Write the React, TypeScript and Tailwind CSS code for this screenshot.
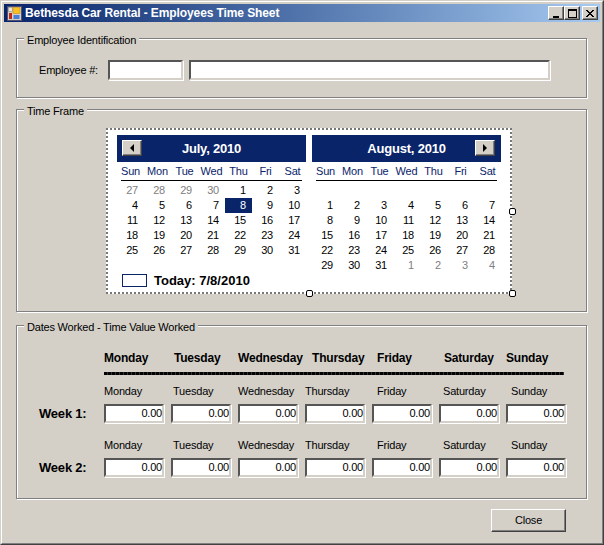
import React from 'react';

const julyDays: [number, boolean][] = [
  [27, true], [28, true], [29, true], [30, true], [1, false], [2, false], [3, false],
  ...Array.from({ length: 28 }, (_, i): [number, boolean] => [i + 4, false]),
];
const augustDays: [number | null, boolean][] = [
  ...Array.from({ length: 7 }, (): [null, boolean] => [null, false]),
  ...Array.from({ length: 31 }, (_, i): [number, boolean] => [i + 1, false]),
  [1, true], [2, true], [3, true], [4, true],
];
const weekDays = ['Sun', 'Mon', 'Tue', 'Wed', 'Thu', 'Fri', 'Sat'];

const headers = [
  { name: 'Monday', big: 'pl-0', small: 'pl-0' },
  { name: 'Tuesday', big: 'pl-[3px]', small: 'pl-[2px]' },
  { name: 'Wednesday', big: 'pl-0', small: 'pl-0' },
  { name: 'Thursday', big: 'pl-[7px]', small: 'pl-0' },
  { name: 'Friday', big: 'pl-[5px]', small: 'pl-[5px]' },
  { name: 'Saturday', big: 'pl-[5px]', small: 'pl-[4px]' },
  { name: 'Sunday', big: 'pl-0', small: 'pl-[5px]' },
];

function GroupBox({ title, className, children }: { title: string; className: string; children: React.ReactNode }) {
  return (
    <div className={`relative border border-[#808080] shadow-[1px_1px_0_#fff,inset_1px_1px_0_#fff] ${className}`}>
      <span className="absolute left-[7px] top-[-5px] bg-[#d4d0c8] px-[3px] leading-[13px]">{title}</span>
      {children}
    </div>
  );
}

function Sunken({ className, children }: { className: string; children?: React.ReactNode }) {
  return (
    <div className={`bg-white border-2 border-t-[#555] border-l-[#555] border-r-[#d4d0c8] border-b-[#d4d0c8] shadow-[1px_1px_0_#fff] ${className}`}>
      {children}
    </div>
  );
}

function Raised({ className, children }: { className: string; children?: React.ReactNode }) {
  return (
    <div className={`flex items-center justify-center bg-[#d4d0c8] border border-t-white border-l-white border-r-[#404040] border-b-[#404040] shadow-[inset_-1px_-1px_0_#808080] ${className}`}>
      {children}
    </div>
  );
}

function Month({ title, days, side, selected }: { title: string; days: [number | null, boolean][]; side: 'left' | 'right'; selected?: number }) {
  return (
    <div className="w-[189px]">
      <div className="relative flex h-[27px] items-center justify-center bg-[#0a246a] text-[13px] font-bold text-white">
        {title}
        {side === 'left' ? (
          <Raised className="absolute left-[5px] top-[5px] h-[16px] w-[20px]">
            <span className="border-y-[4px] border-r-[4px] border-y-transparent border-r-black" />
          </Raised>
        ) : (
          <Raised className="absolute right-[6px] top-[5px] h-[16px] w-[20px]">
            <span className="border-y-[4px] border-l-[4px] border-y-transparent border-l-black" />
          </Raised>
        )}
      </div>
      <div className="flex h-[18px] items-center">
        {weekDays.map((d) => (
          <span key={d} className="w-[27px] text-center text-[#0a246a]">{d}</span>
        ))}
      </div>
      <div className="mx-[4px] h-px w-[181px] bg-black" />
      <div className="mt-[2px] grid grid-cols-[repeat(7,27px)] auto-rows-[15px]">
        {days.map(([n, muted], i) => (
          <span
            key={i}
            className={`pr-[6px] text-right leading-[15px] ${
              !muted && n === selected ? 'bg-[#0a246a] text-white' : muted ? 'text-[#808080]' : 'text-black'
            }`}
          >
            {n}
          </span>
        ))}
      </div>
    </div>
  );
}

function Handle({ className }: { className: string }) {
  return <span className={`absolute h-[7px] w-[7px] rounded-[2px] border border-black bg-white ${className}`} />;
}

export default function App() {
  return (
    <div className="h-[545px] w-[604px] overflow-hidden bg-[#d4d0c8] text-[11px] tracking-[-0.2px] text-black [font-family:'Liberation_Sans',sans-serif]">
      <div className="h-full border border-t-[#d4d0c8] border-l-[#d4d0c8] border-r-[#404040] border-b-[#404040]">
        <div className="h-full border border-t-white border-l-white border-r-[#808080] border-b-[#808080] p-[2px]">
          {/* title bar */}
          <div className="flex h-[18px] items-center bg-gradient-to-r from-[#0a246a] to-[#a6caf0] pl-[3px] pr-[2px]">
            <svg width="15" height="15" viewBox="0 0 15 15" className="shrink-0">
              <rect x="0.5" y="0.5" width="14" height="14" fill="#d4d0c8" stroke="#505070" />
              <rect x="1.5" y="1.5" width="4" height="4" fill="#e8e4dc" stroke="#808080" strokeWidth="0.5" />
              <rect x="6" y="1.5" width="7" height="6" fill="#f8c020" stroke="#c08010" strokeWidth="0.5" />
              <rect x="2" y="7" width="3" height="6" fill="#c02818" />
              <rect x="6.5" y="9" width="6" height="4" fill="#4880d8" />
            </svg>
            <span className="ml-[3px] grow text-[12px] font-bold tracking-[-0.1px] text-white">Bethesda Car Rental - Employees Time Sheet</span>
            <Raised className="h-[14px] w-[16px]">
              <span className="mt-[7px] h-[2px] w-[6px] bg-black" />
            </Raised>
            <Raised className="h-[14px] w-[16px]">
              <span className="h-[9px] w-[9px] border border-t-2 border-black" />
            </Raised>
            <Raised className="ml-[2px] h-[14px] w-[16px]">
              <svg width="8" height="7" viewBox="0 0 8 7">
                <path d="M0 0 L7 7 M1 0 L8 7 M7 0 L0 7 M8 0 L1 7" stroke="black" strokeWidth="1" />
              </svg>
            </Raised>
          </div>

          <div className="px-[12px] pt-[16px]">
            <GroupBox title="Employee Identification" className="h-[60px] w-[571px]">
              <div className="flex items-center pl-[22px] pt-[21px]">
                <span className="mt-[1px] w-[69px]">Employee #:</span>
                <Sunken className="h-[20px] w-[75px]" />
                <Sunken className="ml-[6px] h-[20px] w-[361px]" />
              </div>
            </GroupBox>

            <GroupBox title="Time Frame" className="mt-[11px] h-[203px] w-[571px]">
              <div className="relative ml-[89px] mt-[18px] h-[166px] w-[406px] border-2 border-dotted border-[#777] bg-white">
                <div className="flex gap-[6px] pl-[9px] pt-[5px]">
                  <Month title="July, 2010" days={julyDays} side="left" selected={8} />
                  <Month title="August, 2010" days={augustDays} side="right" />
                </div>
                <div className="flex h-[15px] items-center pl-[14px]">
                  <span className="h-[13px] w-[25px] border border-[#0a246a]" />
                  <span className="ml-[7px] text-[13px] font-bold tracking-normal">Today: 7/8/2010</span>
                </div>
                <Handle className="right-[-6px] top-[78px]" />
                <Handle className="bottom-[-5px] left-[198px]" />
                <Handle className="bottom-[-5px] right-[-6px]" />
              </div>
            </GroupBox>

            <GroupBox title="Dates Worked - Time Value Worked" className="mt-[13px] h-[174px] w-[571px]">
              <div className="pl-[87px] pt-[25px]">
                <div className="grid grid-cols-[repeat(7,67px)] text-[12px] font-bold">
                  {headers.map((h) => (
                    <span key={h.name} className={`whitespace-nowrap leading-[15px] ${h.big}`}>{h.name}</span>
                  ))}
                </div>
                <div className="mt-[6px] h-[3px] w-[460px] bg-[repeating-linear-gradient(90deg,#000_0,#000_3px,#333_3px,#333_4px)]" />
              </div>
              {['Week 1:', 'Week 2:'].map((week, w) => (
                <div key={week} className={w === 0 ? 'mt-[9px]' : 'mt-[14px]'}>
                  <div className="grid grid-cols-[repeat(7,67px)] pl-[87px]">
                    {headers.map((h) => (
                      <span key={h.name} className={`whitespace-nowrap leading-[15px] ${h.small}`}>{h.name}</span>
                    ))}
                  </div>
                  <div className="mt-[5px] flex items-center">
                    <span className="w-[87px] pl-[22px] text-[13px] font-bold">{week}</span>
                    <div className="grid grid-cols-[repeat(7,67px)]">
                      {headers.map((h) => (
                        <Sunken key={h.name} className="h-[19px] w-[60px] text-right leading-[15px]">0.00</Sunken>
                      ))}
                    </div>
                  </div>
                </div>
              ))}
            </GroupBox>

            <div className="mt-[10px] flex w-[550px] justify-end">
              <Raised className="h-[23px] w-[75px]">Close</Raised>
            </div>
          </div>
        </div>
      </div>
    </div>
  );
}
